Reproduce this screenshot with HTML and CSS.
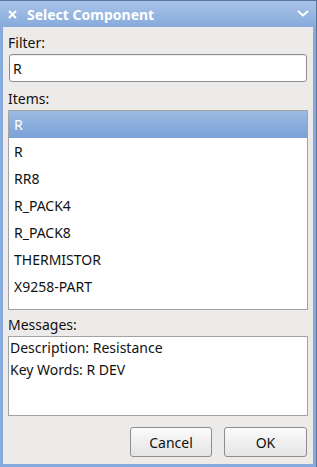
FILE: index.html
```html
<!DOCTYPE html>
<html>
<head>
<meta charset="utf-8">
<link rel="stylesheet" href="styles.css">
</head>
<body>
<div class="window">
  <div class="titlebar">
    <svg class="close-icon" width="9" height="9" viewBox="0 0 9 9"><path d="M1 1 L8 8 M8 1 L1 8" stroke="#fff" stroke-width="2" fill="none"/></svg>
    <span class="title">Select Component</span>
    <svg class="chevron" width="12" height="7" viewBox="0 0 12 7"><path d="M1 1 L6 5.5 L11 1" stroke="#fff" stroke-width="2" fill="none"/></svg>
  </div>
  <div class="content">
    <div class="label">Filter:</div>
    <div class="input">R</div>
    <div class="label label-items">Items:</div>
    <ul class="list">
      <li class="item selected">R</li>
      <li class="item">R</li>
      <li class="item">RR8</li>
      <li class="item">R_PACK4</li>
      <li class="item">R_PACK8</li>
      <li class="item">THERMISTOR</li>
      <li class="item">X9258-PART</li>
    </ul>
    <div class="label label-messages">Messages:</div>
    <div class="messages">
      <div class="msg-line">Description: Resistance</div>
      <div class="msg-line">Key Words: R DEV</div>
    </div>
    <div class="buttons">
      <button class="btn btn-cancel">Cancel</button>
      <button class="btn btn-ok">OK</button>
    </div>
  </div>
</div>
</body>
</html>
```

FILE: styles.css
```css
html, body {
  margin: 0;
  padding: 0;
}
body {
  font-family: "Noto Sans", "DejaVu Sans", sans-serif;
  font-size: 14px;
  color: #111;
}
.window {
  width: 317px;
  height: 467px;
  box-sizing: border-box;
  background: #86aadc;
  border-top: 1px solid #56789f;
  border-right: 1px solid #56789f;
  display: flex;
  flex-direction: column;
}
.titlebar {
  height: 26px;
  flex: none;
  display: flex;
  align-items: center;
  padding: 0 7px 0 8px;
  background: linear-gradient(#a8c3e7, #87abdc);
  color: #fff;
}
.close-icon {
  flex: none;
  margin-top: 1px;
}
.title {
  font-weight: bold;
  font-size: 14px;
  margin-left: 10px;
  flex: 1;
  line-height: 19px;
}
.chevron {
  flex: none;
  margin-top: -1px;
}
.content {
  flex: 1;
  margin: 0 3px 3px 3px;
  background: #edebe9;
  padding: 7px 5px 0 5px;
  display: flex;
  flex-direction: column;
}
.label {
  height: 18px;
  line-height: 18px;
}
.input {
  margin: 2px 1px 0 1px;
  height: 28px;
  box-sizing: border-box;
  border: 1px solid #8e8e8e;
  border-radius: 3px;
  background: #fff;
  padding-left: 3px;
  line-height: 27px;
  box-shadow: inset 0 1px 1px rgba(0,0,0,0.08);
}
.label-items {
  margin-top: 8px;
}
.list {
  list-style: none;
  margin: 2px 0 0 0;
  padding: 0;
  height: 200px;
  box-sizing: border-box;
  border: 1px solid #a2a2a2;
  background: #fff;
}
.item {
  height: 27px;
  line-height: 27px;
  padding-left: 5px;
}
.item.selected {
  background: linear-gradient(#9cbae2, #7aa2d6);
  color: #fff;
}
.label-messages {
  margin-top: 6px;
}
.messages {
  margin-top: 2px;
  height: 80px;
  box-sizing: border-box;
  border: 1px solid #a2a2a2;
  background: #fff;
  padding: 0 0 0 1px;
}
.msg-line {
  line-height: 22px;
}
.buttons {
  margin-top: 11px;
  display: flex;
  justify-content: flex-end;
  gap: 12px;
  padding-right: 1px;
}
.btn {
  height: 30px;
  width: 82px;
  box-sizing: border-box;
  border: 1px solid #8e8e8e;
  border-radius: 3px;
  background: linear-gradient(#fbfbfb, #e4e4e4);
  font-family: "Noto Sans", "DejaVu Sans", sans-serif;
  font-size: 14px;
  color: #111;
  padding: 0;
}
.btn-ok {
  width: 83px;
}
```
